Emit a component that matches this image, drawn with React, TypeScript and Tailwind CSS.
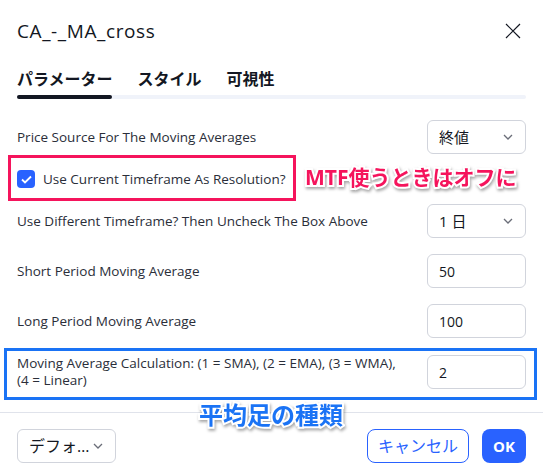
import React from "react";

const Chevron = () => (
  <svg width="10" height="6" viewBox="0 0 10 6" fill="none" className="text-[#6a6d78]">
    <path d="M1 1l4 4 4-4" stroke="currentColor" strokeWidth="1.3" />
  </svg>
);

function Select({ value, className = "" }: { value: string; className?: string }) {
  return (
    <div
      className={`flex h-[34px] items-center justify-between rounded-[6px] border border-[#d1d4dc] pl-[11px] pr-[12px] text-[15px] text-[#131722] ${className}`}
    >
      <span>{value}</span>
      <Chevron />
    </div>
  );
}

function Field({ value }: { value: string }) {
  return (
    <div className="flex h-[34px] w-[99px] items-center rounded-[6px] border border-[#d1d4dc] pl-[11px] text-[14px] text-[#131722]">
      {value}
    </div>
  );
}

function Row({ label, children }: { label: string; children: React.ReactNode }) {
  return (
    <div className="flex h-[50px] items-center justify-between">
      <span className="text-[13.5px] text-[#2a2e39]">{label}</span>
      {children}
    </div>
  );
}

const outline =
  "font-bold [paint-order:stroke_fill] [-webkit-text-stroke:4px_white] [filter:drop-shadow(1px_2px_1.5px_rgba(0,0,0,0.35))]";

export default function App() {
  return (
    <div className="relative h-[475px] w-[543px] overflow-hidden bg-white font-['Open_Sans','Noto_Sans_CJK_JP',sans-serif] text-[#131722]">
      <div className="flex items-center justify-between pl-[17px] pr-[22px] pt-[17px]">
        <h1 className="text-[19px] leading-[28px] tracking-[0.6px]">CA_-_MA_cross</h1>
        <svg width="16" height="16" viewBox="0 0 16 16" className="text-[#131722]">
          <path d="M1 1l14 14M15 1L1 15" stroke="currentColor" strokeWidth="1.2" />
        </svg>
      </div>

      <div className="mt-[23px] px-[17px]">
        <div className="flex gap-[25px] text-[16px] font-bold leading-[22px]">
          <span>パラメーター</span>
          <span>スタイル</span>
          <span>可視性</span>
        </div>
        <div className="mt-[5px] flex h-[4px] rounded-full bg-[#f0f3fa]">
          <div className="w-[95px] rounded-full bg-[#131722]" />
        </div>
      </div>

      <div className="mt-[13px] px-[17px]">
        <Row label="Price Source For The Moving Averages">
          <Select value="終値" className="w-[99px]" />
        </Row>

        <div className="relative flex h-[34px] items-center gap-[8px]">
          <div className="flex h-[18px] w-[18px] items-center justify-center rounded-[4px] bg-[#2962ff]">
            <svg width="11" height="9" viewBox="0 0 11 9" fill="none">
              <path d="M1 4.5l3 3 6-6" stroke="white" strokeWidth="1.8" />
            </svg>
          </div>
          <span className="text-[13.5px] text-[#2a2e39]">Use Current Timeframe As Resolution?</span>
          <div className="absolute -left-[9px] -top-[7px] h-[46px] w-[288px] border-[3px] border-[#f5145c]" />
          <span className={`absolute left-[288px] -top-[2px] text-[21px] leading-[34px] text-[#f5145c] ${outline}`}>
            MTF使うときはオフに
          </span>
        </div>

        <Row label="Use Different Timeframe? Then Uncheck The Box Above">
          <Select value="1 日" className="w-[99px]" />
        </Row>
        <Row label="Short Period Moving Average">
          <Field value="50" />
        </Row>
        <Row label="Long Period Moving Average">
          <Field value="100" />
        </Row>

        <div className="relative flex h-[52px] items-center justify-between">
          <div className="flex flex-col text-[13.5px] leading-[17px] text-[#2a2e39]">
            <span>Moving Average Calculation: (1 = SMA), (2 = EMA), (3 = WMA),</span>
            <span>(4 = Linear)</span>
          </div>
          <Field value="2" />
          <div className="absolute -left-[13px] -right-[11px] top-[2px] h-[52px] border-[3px] border-[#1a73f5]" />
        </div>
      </div>

      <div className="mt-[14px] border-t border-[#e0e3eb]" />

      <span className={`absolute left-[199px] top-[398px] text-[24px] leading-[34px] text-[#1a73f5] ${outline}`}>
        平均足の種類
      </span>

      <div className="flex items-center justify-between px-[17px] pt-[16px]">
        <Select value="デフォ…" className="w-[99px] text-[16px]" />
        <div className="flex gap-[13px]">
          <button className="h-[34px] w-[102px] rounded-[8px] border border-[#2962ff] text-[16px] text-[#2962ff]">
            キャンセル
          </button>
          <button className="h-[34px] w-[44px] rounded-[8px] bg-[#2962ff] text-[15px] font-bold text-white">
            OK
          </button>
        </div>
      </div>
    </div>
  );
}
